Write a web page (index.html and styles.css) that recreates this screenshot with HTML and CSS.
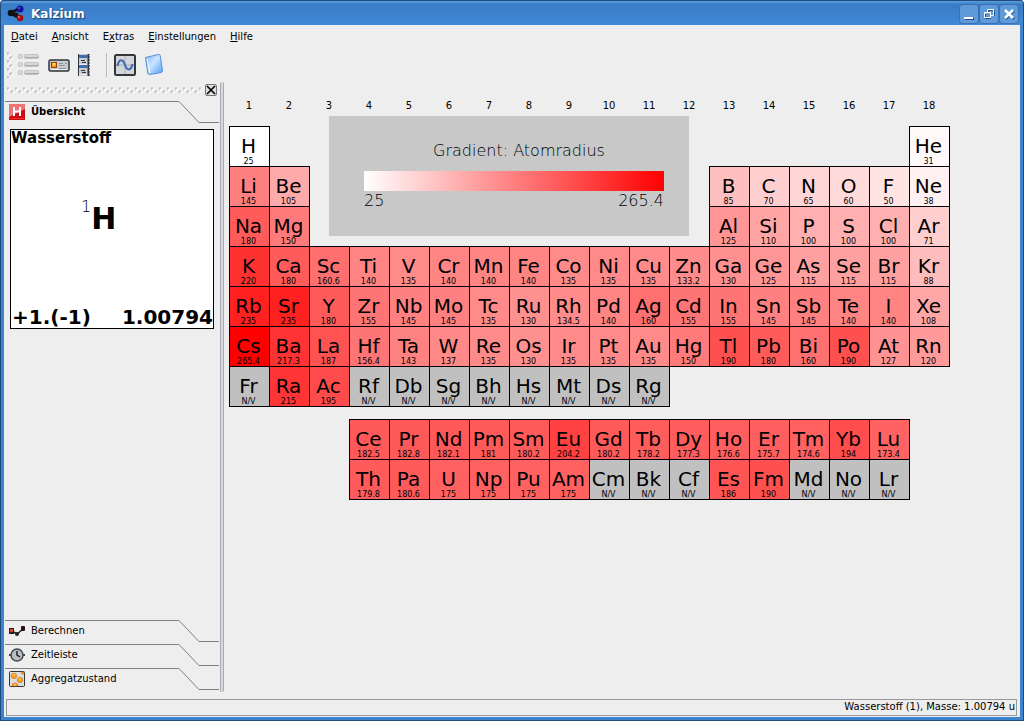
FILE: index.html
```html
<!DOCTYPE html>
<html lang="de">
<head>
<meta charset="utf-8">
<title>Kalzium</title>
<link rel="stylesheet" href="styles.css">
</head>
<body>
<div class="window">
  <header class="titlebar">
    <svg class="app-icon" width="18" height="18" viewBox="0 0 18 18" aria-hidden="true">
      <path d="M4 8 L13 3 M4 8 L13 13 M3 8 L9 10" stroke="#111" stroke-width="3"/>
      <circle cx="4" cy="8" r="3.3" fill="#111"/><circle cx="9" cy="10" r="2.6" fill="#111"/>
      <circle cx="13" cy="4" r="3.5" fill="#12129e"/><circle cx="12" cy="3" r="1" fill="#6868dc"/>
      <circle cx="13" cy="13" r="3.3" fill="#a90d12"/><circle cx="12" cy="12" r="1" fill="#ea7777"/>
    </svg>
    <h1 class="title">Kalzium</h1>
    <div class="window-buttons">
      <button class="window-button" aria-label="Minimieren"><svg width="18" height="18"><path d="M5 14h9" stroke="#244b7c" stroke-width="2"/><path d="M4 13h9" stroke="#fff" stroke-width="2"/></svg></button>
      <button class="window-button" aria-label="Wiederherstellen"><svg width="18" height="18" fill="none"><path d="M8.500 7V5.500H14.500V10.500H12M5.500 8.500h5v5h-5z" stroke="#244b7c"/><path d="M7.500 7V4.500H13.500V10.500H11M4.500 7.500h6v5h-6zM4 8h7" stroke="#fff"/></svg></button>
      <button class="window-button" aria-label="Schließen"><svg width="18" height="18"><path d="M6 6l8 8m0-8l-8 8" stroke="#244b7c" stroke-width="2"/><path d="M5 5l8 8m0-8l-8 8" stroke="#fff" stroke-width="2.500"/></svg></button>
    </div>
  </header>
  <div class="content">
    <nav class="menubar">
      <button class="menu"><u>D</u>atei</button>
      <button class="menu"><u>A</u>nsicht</button>
      <button class="menu">E<u>x</u>tras</button>
      <button class="menu"><u>E</u>instellungen</button>
      <button class="menu"><u>H</u>ilfe</button>
    </nav>
    <div class="toolbar">
      <svg class="grip" width="6" height="26" aria-hidden="true"><defs><pattern id="grip-v" width="6" height="8" patternUnits="userSpaceOnUse"><path d="M0 3V1H2M3 7V5H5" fill="none" stroke="#aaa"/><path d="M1 4H3V2M4 8H6V6" fill="none" stroke="#fff"/></pattern></defs><rect width="6" height="26" fill="url(#grip-v)"/></svg>
      <button class="tool tool-list" aria-label="Liste" disabled><svg width="24" height="24"><g fill="#d8d8d8" stroke="#c2c2c2"><rect x="1.500" y="1.500" width="4" height="4" rx="1"/><rect x="1.500" y="9.500" width="4" height="4" rx="1"/><rect x="1.500" y="17.500" width="4" height="4" rx="1"/><rect x="7.500" y="1.500" width="14" height="4" rx="1.500"/><rect x="7.500" y="9.500" width="14" height="4" rx="1.500"/><rect x="7.500" y="17.500" width="14" height="4" rx="1.500"/></g><path d="M8 4.500h14M8 12.500h14M8 20.500h14" stroke="#aaa"/></svg></button>
      <button class="tool tool-card" aria-label="Legende"><svg width="22" height="24"><rect x="1" y="7" width="20" height="11" rx="1.500" fill="#c8ccd0" stroke="#303538" stroke-width="1.500"/><rect x="3.500" y="9.500" width="5" height="5" fill="#ff9c12" stroke="#984309"/><path d="M5 11h2" stroke="#fff16b" stroke-width="2"/><path d="M11 10.500h4M17 10.500h2M11 12.500h6M11 15.500h7" stroke="#8c9297"/><path d="M3 16.500h16" stroke="#eee"/></svg></button>
      <button class="tool tool-film" aria-label="Tabelle"><svg width="12" height="24"><rect y="1" width="12" height="22" fill="#c8cbd1"/><path d="M.5 1v22" stroke="#30343c"/><path d="M10.500 1v22" stroke="#30343c" stroke-width="2"/><path d="M11.500 2v20" stroke="#ddd" stroke-dasharray="1 2"/><path d="M1 3.500h9M1 13.500h9" stroke="#416bb0" stroke-width="3"/><path d="M1 11.500h8M1 21.500h8" stroke="#eee"/><path d="M3 7.500h4M4 9.500h4M3 17.500h4M4 19.500h4" stroke="#30343c"/></svg></button>
      <span class="separator"></span>
      <button class="tool tool-plot" aria-label="Daten plotten"><svg width="22" height="24"><rect x="1" y="2" width="20" height="20" rx="1.500" fill="#d2d6da" stroke="#33363a" stroke-width="2"/><path d="M11 3v18M2 12h18" stroke="#aab0b5"/><path d="M3.500 13C5 5 9 6 11 12S17 18 18.500 11" fill="none" stroke="#3d67b5" stroke-width="2"/></svg></button>
      <button class="tool tool-book" aria-label="Glossar"><svg width="20" height="24"><defs><linearGradient id="book" x1="0" y1="0" x2="1" y2="1"><stop stop-color="#86b7f5"/><stop offset=".45" stop-color="#c9e5ff"/><stop offset="1" stop-color="#4e9cf0"/></linearGradient></defs><path d="M1.500 4.500L14.500 1.500Q16 1 16.200 2.500L18.500 17.500Q18.500 19 17.500 19.500L5.500 21.500Q4 21.500 3.800 20Z" fill="url(#book)" stroke="#538fdc"/><path d="M3 5.500L6 20" stroke="#edf7ff"/></svg></button>
    </div>
    <main class="workspace">
      <aside class="sidebar">
        <div class="dock-handle">
          <svg class="dock-grip" height="6" aria-hidden="true"><defs><pattern id="grip-h" width="8" height="6" patternUnits="userSpaceOnUse"><path d="M0 3V1H2M4 6V4H6" fill="none" stroke="#aaa"/><path d="M1 4H3V2M5 6H7V5" fill="none" stroke="#fff"/></pattern></defs><rect width="100%" height="6" fill="url(#grip-h)"/></svg>
          <button class="dock-close" aria-label="Leiste schließen"><svg width="10" height="10"><path d="M1 1l8 8m0-8l-8 8" stroke="#000" stroke-width="1.600"/></svg></button>
        </div>
        <button class="tab tab-active">
          <svg class="tab-line" width="215" height="23" aria-hidden="true"><path d="M0 .5H174L194 21.500H214" fill="none" stroke="#808080"/></svg>
          <svg class="tab-icon" width="16" height="16"><rect width="16" height="16" fill="#c80d14"/><path d="M0 0h16v5L0 13z" fill="#ef7474"/><path d="M5 3v9M11 3v9M5 7.500h6" stroke="#fff" stroke-width="2"/><path d="M1 14.500h14" stroke="#ff2525"/></svg>
          <span>Übersicht</span>
        </button>
        <section class="overview">
          <h2 class="overview-name">Wasserstoff</h2>
          <p class="overview-symbol"><span class="overview-number">1</span><b>H</b></p>
          <p class="overview-facts"><span>+1.(-1)</span><span>1.00794</span></p>
        </section>
        <div class="tabs">
          <button class="tab">
            <svg class="tab-line" width="215" height="23" aria-hidden="true"><path d="M0 .5H174L194 21.500H214" fill="none" stroke="#808080"/></svg>
            <svg class="tab-icon" width="16" height="16"><path d="M3 8l5 3 6-5" fill="none" stroke="#222" stroke-width="1.500"/><rect y="5" width="5" height="6" fill="#222"/><rect x="1" y="6" width="3" height="3" fill="#d24130"/><rect x="12" y="3" width="4" height="5" rx="1" fill="#2b1111"/><circle cx="8" cy="11" r="2" fill="#222"/></svg>
            <span>Berechnen</span>
          </button>
          <button class="tab">
            <svg class="tab-line" width="215" height="23" aria-hidden="true"><path d="M0 .5H174L194 21.500H214" fill="none" stroke="#808080"/></svg>
            <svg class="tab-icon" width="16" height="16"><path d="M0 8h16" stroke="#444" stroke-width="2"/><circle cx="8" cy="8" r="6" fill="#b9bec3" stroke="#45494d" stroke-width="1.500"/><path d="M8 4v4l3 2" fill="none" stroke="#222" stroke-width="1.500"/></svg>
            <span>Zeitleiste</span>
          </button>
          <button class="tab">
            <svg class="tab-line" width="215" height="23" aria-hidden="true"><path d="M0 .5H174L194 21.500H214" fill="none" stroke="#808080"/></svg>
            <svg class="tab-icon" width="16" height="16"><rect x=".5" y=".5" width="15" height="15" rx="1" fill="#ddd" stroke="#33363a"/><g fill="#ffa014" stroke="#c06412" stroke-width=".5"><circle cx="5" cy="5" r="2.700"/><circle cx="11" cy="9" r="2.700"/><path d="M3 15a3 3 0 0 1 6 0zM12 1h3v2h-2z"/></g><path d="M4 4h2M10 8h2M5 14h2" stroke="#ffe3a2"/></svg>
            <span>Aggregatzustand</span>
          </button>
        </div>
      </aside>
      <div class="splitter"></div>
      <section class="chart">
        <div class="chart-canvas">
          <table class="periodic" aria-label="Periodensystem">
            <thead><tr id="groups"></tr></thead>
            <tbody id="elements"></tbody>
          </table>
          <figure class="legend">
            <figcaption class="legend-title">Gradient: Atomradius</figcaption>
            <div class="legend-bar"></div>
            <div class="legend-range"><span>25</span><span>265.4</span></div>
          </figure>
        </div>
      </section>
    </main>
    <footer class="statusbar"><div class="status">Wasserstoff (1), Masse: 1.00794 u</div></footer>
  </div>
</div>
<script src="script.js"></script>
</body>
</html>
```
FILE: styles.css
```css
* { box-sizing: border-box; }
body { margin: 0; font-family: "DejaVu Sans", sans-serif; font-size: 10px; color: #000; }
button { margin: 0; padding: 0; border: 0; background: none; color: inherit; font: inherit; }
svg { display: block; flex: none; }
h1, h2, p, figure { margin: 0; }

.window { display: flex; flex-direction: column; height: 100vh; background: #3c84d0; border-right: 1px solid #1f4a7c; border-bottom: 1px solid #1f4a7c; border-left: 1px solid #1f4a7c; border-radius: 4px 4px 0 0; }
.titlebar { display: flex; align-items: center; gap: 6px; height: 25px; flex: none; padding: 2px 5px 0 6px; border-top: 1px solid #1f4a7c; border-radius: 3px 3px 0 0; background: linear-gradient(#5b9ee0, #397cc5 15%, #3f8ad8); }
.title { flex: 1; color: #fff; font-size: 12px; line-height: 20px; text-shadow: 1px 1px 1px #1d3f6c; }
.window-buttons { display: flex; gap: 2px; }
.window-button { width: 18px; height: 18px; border-radius: 3px; background: #5e9ad9; box-shadow: 0 0 0 1px #3871b4; }

.content { display: flex; flex-direction: column; flex: 1; min-height: 0; margin: 0 3px 3px; background: #eee; }
.menubar { display: flex; gap: 14px; height: 23px; flex: none; padding-left: 7px; align-items: center; }
.toolbar { display: flex; align-items: center; height: 34px; flex: none; padding-left: 3px; }
.tool { display: flex; align-items: center; }
.tool-list { margin-left: 4px; }
.tool-card { margin-left: 7px; }
.tool-film { margin-left: 8px; }
.separator { width: 1px; height: 24px; margin: 0 7px 0 16px; background: #bbb; }
.tool-book { margin-left: 8px; }

.workspace { display: flex; flex: 1; min-height: 0; }
.sidebar { display: flex; flex-direction: column; width: 216px; flex: none; padding-left: 1px; }
.dock-handle { display: flex; align-items: center; gap: 3px; height: 19px; padding: 0 3px 3px 2px; }
.dock-grip { flex: 1; min-width: 0; }
.dock-close { display: grid; place-items: center; width: 12px; height: 12px; border: 1px solid #777; border-radius: 2px; background: #ddd; }
.tab { position: relative; display: flex; align-items: center; gap: 6px; width: 100%; height: 24px; padding: 0 0 3px 4px; text-align: left; }
.tab-line { position: absolute; top: 0; left: 0; }
.tab-active { font-weight: bold; }
.overview { display: flex; flex-direction: column; height: 200px; margin: 4px 6px 4px 5px; border: 1px solid #000; background: #fff; }
.overview-name { font-size: 15px; line-height: 16px; }
.overview-symbol { display: flex; align-items: flex-start; padding: 49px 0 0 70px; }
.overview-symbol b { padding-top: 6px; font-size: 30px; line-height: 36px; }
.overview-number { font-size: 16px; font-weight: 200; line-height: 24px; }
.overview-facts { display: flex; justify-content: space-between; margin-top: auto; padding-left: 1px; font-size: 20px; font-weight: bold; line-height: 22px; }
.tabs { margin-top: auto; }
.splitter { width: 4px; flex: none; border: solid #a9abb0; border-width: 0 1px; border-radius: 2px; background: #d5d8df; }

.chart { flex: 1; min-width: 0; padding: 12px 0 0 5px; }
.chart-canvas { position: relative; }
.periodic { width: 720px; table-layout: fixed; border-collapse: collapse; }
.periodic th { height: 32px; padding: 0; font-weight: normal; line-height: 24px; vertical-align: top; }
.periodic td { height: 40px; padding: 0; vertical-align: top; }
.periodic .gap td { height: 13px; }
.element { position: relative; display: block; width: 41px; height: 41px; margin: 0 -1px -1px 0; padding: 7px 2px 0 0; border: 1px solid #000; text-align: center; white-space: nowrap; }
.symbol { display: block; font-size: 20px; line-height: 24px; }
.value { display: block; font-size: 8px; line-height: 8px; }
.legend { position: absolute; top: 22px; left: 100px; width: 360px; height: 120px; padding: 23px 25px 0 35px; background: #c8c8c8; font-size: 16px; font-weight: 200; }
.legend-title { line-height: 24px; padding-left: 10px; text-align: center; }
.legend-bar { height: 20px; margin-top: 8px; background: linear-gradient(to right, #fff, #f00); }
.legend-range { display: flex; justify-content: space-between; line-height: 20px; }

.statusbar { flex: none; padding: 7px 3px 1px 2px; }
.status { height: 17px; padding-right: 1px; border: 1px solid #999; line-height: 14px; text-align: right; }
```
FILE: script.js
```js
const MIN = 25;
const MAX = 265.4;

// Each row lists "Symbol:radius"; a number skips that many columns.
const rows = [
  "H:25 16 He:31",
  "Li:145 Be:105 10 B:85 C:70 N:65 O:60 F:50 Ne:38",
  "Na:180 Mg:150 10 Al:125 Si:110 P:100 S:100 Cl:100 Ar:71",
  "K:220 Ca:180 Sc:160.6 Ti:140 V:135 Cr:140 Mn:140 Fe:140 Co:135 Ni:135 Cu:135 Zn:133.2 Ga:130 Ge:125 As:115 Se:115 Br:115 Kr:88",
  "Rb:235 Sr:235 Y:180 Zr:155 Nb:145 Mo:145 Tc:135 Ru:130 Rh:134.5 Pd:140 Ag:160 Cd:155 In:155 Sn:145 Sb:145 Te:140 I:140 Xe:108",
  "Cs:265.4 Ba:217.3 La:187 Hf:156.4 Ta:143 W:137 Re:135 Os:130 Ir:135 Pt:135 Au:135 Hg:150 Tl:190 Pb:180 Bi:160 Po:190 At:127 Rn:120",
  "Fr:N/V Ra:215 Ac:195 Rf:N/V Db:N/V Sg:N/V Bh:N/V Hs:N/V Mt:N/V Ds:N/V Rg:N/V 7",
  "",
  "3 Ce:182.5 Pr:182.8 Nd:182.1 Pm:181 Sm:180.2 Eu:204.2 Gd:180.2 Tb:178.2 Dy:177.3 Ho:176.6 Er:175.7 Tm:174.6 Yb:194 Lu:173.4 1",
  "3 Th:179.8 Pa:180.6 U:175 Np:175 Pu:175 Am:175 Cm:N/V Bk:N/V Cf:N/V Es:186 Fm:190 Md:N/V No:N/V Lr:N/V 1"
];

function color(value) {
  if (value === "N/V") return "#c0c0c0";
  const level = Math.round(255 * (1 - (value - MIN) / (MAX - MIN)));
  return `rgb(255, ${level}, ${level})`;
}

function cell(item) {
  const [symbol, value] = item.split(":");
  if (!value) return `<td colspan="${symbol}"></td>`;
  return `<td><button class="element" style="background-color: ${color(value)}">` +
    `<span class="symbol">${symbol}</span><span class="value">${value}</span></button></td>`;
}

document.getElementById("groups").innerHTML =
  Array.from({ length: 18 }, (_, i) => `<th scope="col">${i + 1}</th>`).join("");

document.getElementById("elements").innerHTML = rows.map(row =>
  row ? `<tr>${row.split(" ").map(cell).join("")}</tr>` : '<tr class="gap"><td colspan="18"></td></tr>'
).join("");
```
